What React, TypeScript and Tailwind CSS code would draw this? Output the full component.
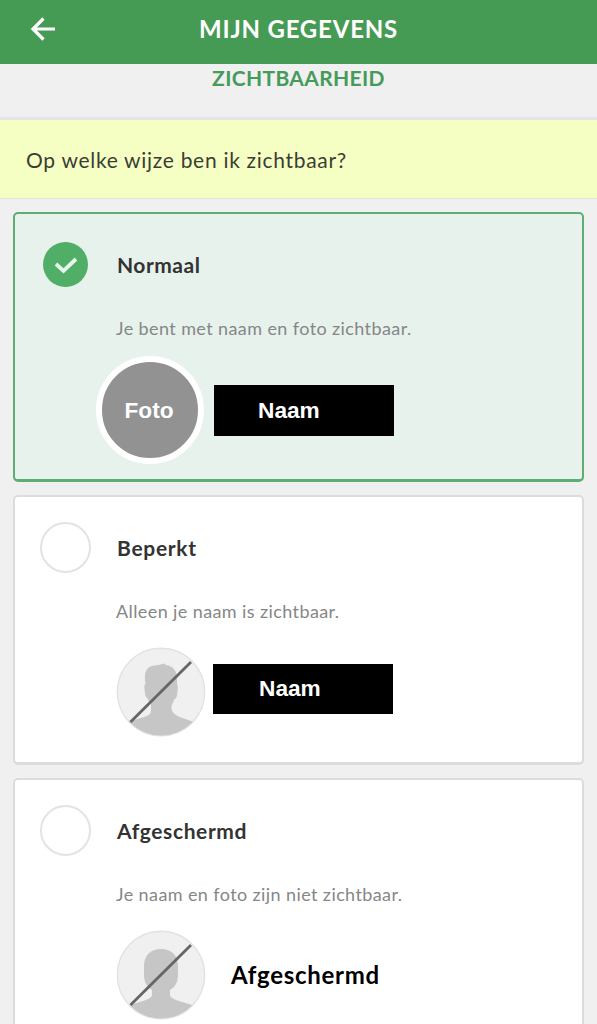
import clsx from "clsx"

const options = [
  {
    id: "normal",
    title: "Normaal",
    description: "Je bent met naam en foto zichtbaar.",
    titleClass: "tracking-[0.5px]",
  },
  {
    id: "limited",
    title: "Beperkt",
    description: "Alleen je naam is zichtbaar.",
    titleClass: "tracking-[0.7px]",
  },
  {
    id: "hidden",
    title: "Afgeschermd",
    description: "Je naam en foto zijn niet zichtbaar.",
    titleClass: "tracking-[0.6px]",
  },
]

function Radio({ checked }: { checked: boolean }) {
  if (checked) {
    return (
      <span className="m-[3px] flex size-[45px] shrink-0 items-center justify-center rounded-full bg-[#50ae67]">
        <svg width="24" height="18" viewBox="0 0 24 18" fill="none">
          <path d="M2 8 9.5 14.800 22 3" stroke="#e8f7ec" strokeWidth="3.800" />
        </svg>
      </span>
    )
  }
  return <span className="size-[51px] shrink-0 rounded-full border-2 border-[#e3e3e3] bg-white" />
}

function Avatar({ generic = false }: { generic?: boolean }) {
  return (
    <svg className="shrink-0" width="90" height="90" viewBox="0 0 90 90">
      <defs>
        <clipPath id={generic ? "clip-generic" : "clip-person"}>
          <circle cx="45" cy="45" r="43.5" />
        </clipPath>
      </defs>
      <circle cx="45" cy="45" r="43.7" fill="#f0f0f0" stroke="#e2e2e2" strokeWidth="1.4" />
      <g fill="#c6c6c6" clipPath={generic ? "url(#clip-generic)" : "url(#clip-person)"}>
        {generic ? (
          <path d="M45 19C34 19 28 26 28 36V45C28 53 32 58 36 60V65C36 69 26 71 11 76V90H79V76C64 71 54 69 54 65V60C58 58 62 53 62 45V36C62 26 56 19 45 19Z" />
        ) : (
          <path d="M29 33C28 22 33 18 43 18L48 16.5 50 18C57 19 61 24 61 32V37C62 38 62 42 61 48 60.500 51 59.500 52 58.500 52 57.500 55 56 57 55.500 59V62C57 69 67 71 78 75V90H10V75C23 71 35 70 35 64V57C33 55 32 53 31.500 51 29.500 51 29 47 28.500 42 28 39 28.500 37 29.500 37Z" />
        )}
      </g>
      <path d="M14.500 75 75 15" stroke="#666" strokeWidth="2.800" />
    </svg>
  )
}

function NameBox({ className }: { className: string }) {
  return (
    <div
      className={clsx(
        "flex w-[180px] items-center bg-black font-['Liberation_Sans',Arial,sans-serif] text-[22.7px] font-bold text-white",
        className
      )}
    >
      Naam
    </div>
  )
}

function Preview({ id }: { id: string }) {
  if (id === "normal") {
    return (
      <div className="ml-[81px] flex items-center">
        <div className="flex size-[108px] shrink-0 items-center justify-center rounded-full border-[6.500px] border-white bg-[#929292] pr-[2px] font-['Liberation_Sans',Arial,sans-serif] text-[22.7px] font-bold text-white">
          Foto
        </div>
        <NameBox className="ml-[10px] h-[51px] pl-[44px]" />
      </div>
    )
  }
  if (id === "limited") {
    return (
      <div className="ml-[101px] flex items-start">
        <Avatar />
        <NameBox className="mt-[17px] ml-[7px] h-[50px] pb-px pl-[46px]" />
      </div>
    )
  }
  return (
    <div className="ml-[101px] flex items-center">
      <Avatar generic />
      <span className="ml-[25px] text-[24px] font-bold tracking-[0.7px] text-black">Afgeschermd</span>
    </div>
  )
}

export default function App() {
  const selected = "normal"

  return (
    <div className="h-screen overflow-hidden bg-[#f0f0f0] font-[Lato,sans-serif]">
      <header className="grid h-16 grid-cols-[86px_1fr_86px] items-center bg-[#469b54] pb-[6px] text-white">
        <button className="flex justify-center">
          <svg width="26" height="26" viewBox="0 0 26 26" fill="none" stroke="currentColor" strokeWidth="3.200">
            <path d="M25 13H3M13.500 2.500 3 13 13.500 23.500" />
          </svg>
        </button>
        <h1 className="text-center text-[24px] font-bold tracking-[0.8px] whitespace-nowrap">MIJN GEGEVENS</h1>
      </header>

      <h2 className="h-[56px] border-b-[3px] border-[#e5e5e3] text-center text-[21px] leading-[28px] font-bold tracking-[0.35px] text-[#469b5a]">
        ZICHTBAARHEID
      </h2>

      <p className="h-[79px] border-b border-[#e2e3d8] bg-[#f6ffc3] pl-[26px] text-[21px] leading-[80px] tracking-[0.7px] text-[#3b3d35]">
        Op welke wijze ben ik zichtbaar?
      </p>

      <main className="flex flex-col gap-[13px] px-[13px] pt-[13px]">
        {options.map((option) => {
          const checked = option.id === selected

          return (
            <section
              key={option.id}
              className={clsx(
                "h-[270px] shrink-0 rounded-[5px] border-2 border-b-[3px] pt-[25px]",
                checked ? "border-[#5cae73] bg-[#e7f2ed]" : "border-[#dcdcdc] bg-white"
              )}
            >
              <div className="flex h-[51px] items-center pl-[25px]">
                <Radio checked={checked} />
                <h3 className={clsx("ml-[26px] text-[21px] font-bold text-[#333]", option.titleClass)}>
                  {option.title}
                </h3>
              </div>
              <p className="mt-[25px] ml-[101px] text-[18px] leading-[26px] tracking-[0.4px] text-[#858786]">
                {option.description}
              </p>
              <div className={clsx("flex h-[112px] items-center", checked ? "mt-[13px]" : "mt-[12px]")}>
                <Preview id={option.id} />
              </div>
            </section>
          )
        })}
      </main>
    </div>
  )
}
